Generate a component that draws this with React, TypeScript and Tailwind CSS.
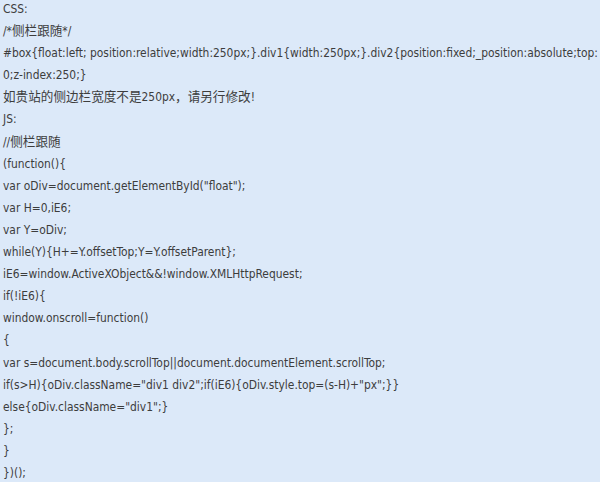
const lines: string[] = [
  "CSS:",
  "/*侧栏跟随*/",
  "#box{float:left; position:relative;width:250px;}.div1{width:250px;}.div2{position:fixed;_position:absolute;top:",
  "0;z-index:250;}",
  "如贵站的侧边栏宽度不是250px，请另行修改!",
  "JS:",
  "//侧栏跟随",
  "(function(){",
  'var oDiv=document.getElementById("float");',
  "var H=0,iE6;",
  "var Y=oDiv;",
  "while(Y){H+=Y.offsetTop;Y=Y.offsetParent};",
  "iE6=window.ActiveXObject&&!window.XMLHttpRequest;",
  "if(!iE6){",
  "window.onscroll=function()",
  "{",
  "var s=document.body.scrollTop||document.documentElement.scrollTop;",
  'if(s>H){oDiv.className="div1 div2";if(iE6){oDiv.style.top=(s-H)+"px";}}',
  'else{oDiv.className="div1";}',
  "};",
  "}",
  "})();",
];

function Line({ text }: { text: string }) {
  const parts = text.split(/([\u3000-\u9fff\uff00-\uffef]+)/);
  return (
    <div className="whitespace-pre">
      {parts.map((p, i) =>
        /[\u3000-\u9fff\uff00-\uffef]/.test(p) ? (
          <span key={i} className="text-[12.6px]">
            {p}
          </span>
        ) : (
          <span key={i}>{p}</span>
        )
      )}
    </div>
  );
}

export default function App() {
  return (
    <div className="w-[600px] h-[482px] overflow-hidden bg-[#dce9f9] text-[#3d3d3d] text-[11.9px] leading-[22.1px] pl-[3px] font-['DejaVu_Sans_Condensed','Noto_Sans_CJK_SC',sans-serif]">
      <div className="-mt-[2px] flex flex-col">
        {lines.map((l, i) => (
          <Line key={i} text={l} />
        ))}
      </div>
    </div>
  );
}
